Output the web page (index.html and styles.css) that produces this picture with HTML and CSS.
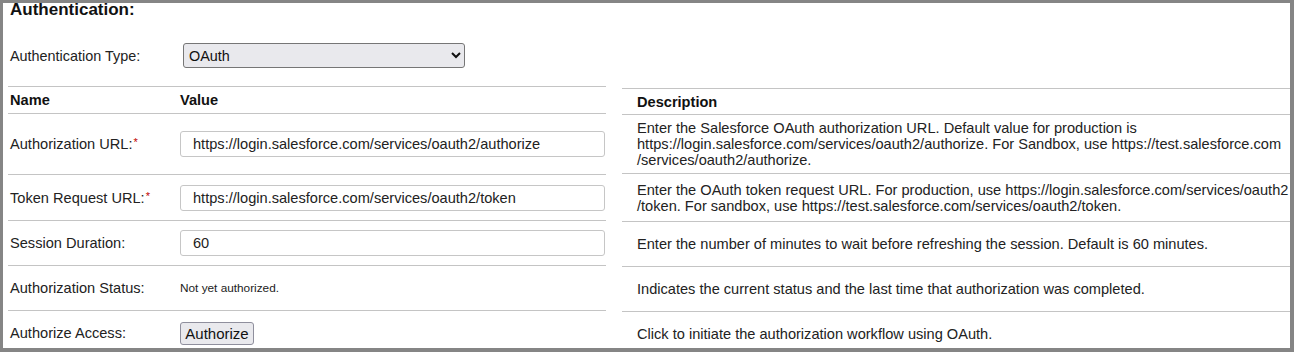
FILE: index.html
```html
<!DOCTYPE html>
<html>
<head>
<meta charset="utf-8">
<link rel="stylesheet" href="styles.css">
</head>
<body>
<div class="frame">
  <h2 class="title">Authentication:</h2>
  <div class="type-row">
    <span class="type-label">Authentication Type:</span>
    <select class="type-select"><option>OAuth</option></select>
  </div>
  <div class="tables">
    <div class="left">
      <div class="row head h27"><div class="c1">Name</div><div>Value</div></div>
      <div class="row h61"><div class="c1">Authorization URL:<span class="req">*</span></div><div><input class="field" value="https://login.salesforce.com/services/oauth2/authorize"></div></div>
      <div class="row h46"><div class="c1">Token Request URL:<span class="req">*</span></div><div><input class="field" value="https://login.salesforce.com/services/oauth2/token"></div></div>
      <div class="row h45"><div class="c1">Session Duration:</div><div><input class="field" value="60"></div></div>
      <div class="row h45"><div class="c1">Authorization Status:</div><div class="status">Not yet authorized.</div></div>
      <div class="row h45"><div class="c1">Authorize Access:</div><div><button class="btn">Authorize</button></div></div>
    </div>
    <div class="right">
      <div class="drow head h26">Description</div>
      <div class="drow h59"><div class="desc">Enter the Salesforce OAuth authorization URL. Default value for production is<br>https://login.salesforce.com/services/oauth2/authorize. For Sandbox, use https://test.salesforce.com<br>/services/oauth2/authorize.</div></div>
      <div class="drow h48"><div class="desc">Enter the OAuth token request URL. For production, use https://login.salesforce.com/services/oauth2<br>/token. For sandbox, use https://test.salesforce.com/services/oauth2/token.</div></div>
      <div class="drow h45"><div class="desc">Enter the number of minutes to wait before refreshing the session. Default is 60 minutes.</div></div>
      <div class="drow h45"><div class="desc">Indicates the current status and the last time that authorization was completed.</div></div>
      <div class="drow h45"><div class="desc">Click to initiate the authorization workflow using OAuth.</div></div>
    </div>
  </div>
</div>
</body>
</html>
```
FILE: styles.css
```css
html, body { margin: 0; padding: 0; background: #fff; }
.frame {
  box-sizing: border-box;
  width: 1294px;
  height: 352px;
  border-style: solid;
  border-color: #858585;
  border-width: 3px 4px 4px 3px;
  overflow: hidden;
  font-family: "Liberation Sans", Arial, sans-serif;
  font-size: 14.6px;
  color: #222;
}
.title {
  margin: -2px 0 0 7px;
  font-size: 17px;
  line-height: 17px;
  font-weight: bold;
  color: #111;
}
.type-row {
  display: flex;
  align-items: center;
  height: 25px;
  margin-top: 25px;
  padding-left: 7px;
}
.type-label { width: 173px; font-size: 14.4px; }
.type-select {
  width: 282px;
  height: 25px;
  padding-left: 1px;
  font-family: "Liberation Sans", Arial, sans-serif;
  font-size: 14.4px;
  color: #111;
  background-color: #e9e9ed;
  border: 1px solid #767676;
  border-radius: 3px;
  margin: 0;
}
.tables {
  display: flex;
  gap: 16px;
  margin-top: 18px;
  padding-left: 5px;
}
.left { width: 598px; flex: none; }
.right { flex: 1; margin-top: 2px; }
.row {
  box-sizing: border-box;
  display: grid;
  grid-template-columns: 172px 1fr;
  align-items: center;
  border-top: 1px solid #c4c4c4;
}
.row .c1 { padding-left: 2px; }
.drow {
  box-sizing: border-box;
  display: flex;
  align-items: center;
  border-top: 1px solid #c4c4c4;
  padding-left: 15px;
}
.head { font-weight: bold; color: #111; }
.h26 { height: 26px; }
.h27 { height: 27px; }
.h45 { height: 45px; }
.h46 { height: 46px; }
.h48 { height: 48px; }
.h59 { height: 59px; }
.h61 { height: 61px; }
.desc { line-height: 16px; white-space: nowrap; }
.req {
  color: #c00000;
  font-size: 11px;
  vertical-align: 3px;
  margin-left: 1px;
}
.field {
  box-sizing: border-box;
  width: 425px;
  height: 26px;
  padding: 0 0 0 12px;
  margin: 0;
  border: 1px solid #c6c6c6;
  border-radius: 3px;
  font-family: "Liberation Sans", Arial, sans-serif;
  font-size: 14.6px;
  color: #222;
  background: #fff;
}
.status { font-size: 11.8px; color: #222; }
.btn {
  box-sizing: border-box;
  width: 74px;
  height: 23px;
  padding: 0;
  margin: 0;
  font-family: "Liberation Sans", Arial, sans-serif;
  font-size: 15px;
  color: #111;
  background: #e9e9ed;
  border: 1px solid #8f8f9d;
  border-radius: 3px;
}
```
